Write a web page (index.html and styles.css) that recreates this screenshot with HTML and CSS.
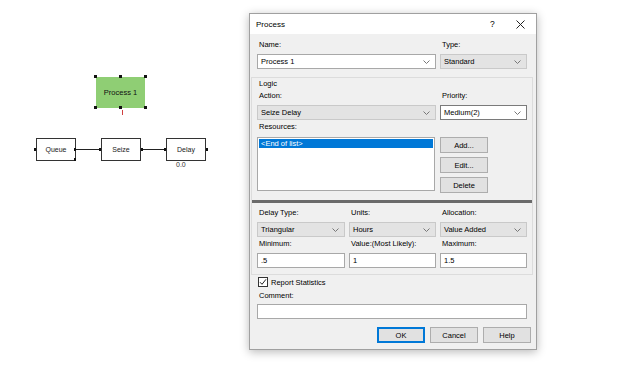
FILE: index.html
```html
<!doctype html>
<html lang="en">
    <head>
        <meta charset="UTF-8" />
        <title>Process</title>
        <link rel="stylesheet" href="styles.css">
    </head>
    <body>
        <div class="desk">
            <div class="canvas">
                <svg class="wires" width="249" height="365">
                    <line x1="74" y1="149.5" x2="101" y2="149.5" />
                    <line x1="141" y1="149.5" x2="166" y2="149.5" />
                </svg>

                <div class="node process" style="left:96px;top:77px">Process 1</div>
                <span class="handle" style="left:94px;top:75px"></span>
                <span class="handle" style="left:119px;top:75px"></span>
                <span class="handle" style="left:144px;top:75px"></span>
                <span class="handle" style="left:94px;top:106px"></span>
                <span class="handle" style="left:119px;top:106px"></span>
                <span class="handle" style="left:144px;top:106px"></span>
                <span class="tick red" style="left:122px;top:110px"></span>

                <div class="node box" style="left:36px;top:138px">Queue</div>
                <div class="node box" style="left:101px;top:138px">Seize</div>
                <div class="node box" style="left:166px;top:138px">Delay</div>
                <span class="dot" style="left:34px;top:148px"></span>
                <span class="dot" style="left:74px;top:148px"></span>
                <span class="dot" style="left:74px;top:158px"></span>
                <span class="dot" style="left:99px;top:148px"></span>
                <span class="dot" style="left:141px;top:148px"></span>
                <span class="dot" style="left:164px;top:148px"></span>
                <span class="dot" style="left:206px;top:148px"></span>
                <div class="note" style="left:176px;top:161px">0.0</div>
            </div>

            <div class="dialog">
                <div class="titlebar">
                    <span class="title">Process</span>
                    <span class="help">?</span>
                    <svg class="close" width="9" height="9" viewBox="0 0 9 9">
                        <path d="M0.5 0.5 L8.5 8.5 M8.5 0.5 L0.5 8.5" />
                    </svg>
                </div>

                <div class="dlg-body">
                    <div class="row3">
                        <div class="field span2">
                            <div class="lbl">Name:</div>
                            <div class="combo">Process 1<svg class="chev" width="7" height="4"><path d="M0.5 0.5 L3.5 3.5 L6.5 0.5" /></svg></div>
                        </div>
                        <div class="field">
                            <div class="lbl">Type:</div>
                            <div class="combo off">Standard<svg class="chev" width="7" height="4"><path d="M0.5 0.5 L3.5 3.5 L6.5 0.5" /></svg></div>
                        </div>
                    </div>

                    <div class="group">
                        <div class="group-title">Logic</div>
                        <div class="row3">
                            <div class="field span2">
                                <div class="lbl">Action:</div>
                                <div class="combo off">Seize Delay<svg class="chev" width="7" height="4"><path d="M0.5 0.5 L3.5 3.5 L6.5 0.5" /></svg></div>
                            </div>
                            <div class="field">
                                <div class="lbl">Priority:</div>
                                <div class="combo dark">Medium(2)<svg class="chev" width="7" height="4"><path d="M0.5 0.5 L3.5 3.5 L6.5 0.5" /></svg></div>
                            </div>
                        </div>

                        <div class="lbl res-lbl">Resources:</div>
                        <div class="res-row">
                            <div class="listbox">
                                <div class="item sel">&lt;End of list&gt;</div>
                            </div>
                            <div class="res-btns">
                                <button class="btn">Add...</button>
                                <button class="btn">Edit...</button>
                                <button class="btn">Delete</button>
                            </div>
                        </div>

                        <div class="separator"></div>

                        <div class="row3">
                            <div class="field">
                                <div class="lbl">Delay Type:</div>
                                <div class="combo off">Triangular<svg class="chev" width="7" height="4"><path d="M0.5 0.5 L3.5 3.5 L6.5 0.5" /></svg></div>
                            </div>
                            <div class="field">
                                <div class="lbl">Units:</div>
                                <div class="combo off">Hours<svg class="chev" width="7" height="4"><path d="M0.5 0.5 L3.5 3.5 L6.5 0.5" /></svg></div>
                            </div>
                            <div class="field">
                                <div class="lbl">Allocation:</div>
                                <div class="combo off">Value Added<svg class="chev" width="7" height="4"><path d="M0.5 0.5 L3.5 3.5 L6.5 0.5" /></svg></div>
                            </div>
                        </div>
                        <div class="row3 values">
                            <div class="field">
                                <div class="lbl">Minimum:</div>
                                <div class="input">.5</div>
                            </div>
                            <div class="field">
                                <div class="lbl">Value:(Most Likely):</div>
                                <div class="input">1</div>
                            </div>
                            <div class="field">
                                <div class="lbl">Maximum:</div>
                                <div class="input">1.5</div>
                            </div>
                        </div>
                    </div>

                    <div class="check">
                        <span class="box-check">
                            <svg width="8" height="8" viewBox="0 0 8 8"><path d="M1 4.2 L3 6.3 L7 1.3" /></svg>
                        </span>
                        Report Statistics
                    </div>

                    <div class="lbl comment-lbl">Comment:</div>
                    <div class="input wide"></div>

                    <div class="actions">
                        <button class="btn default">OK</button>
                        <button class="btn">Cancel</button>
                        <button class="btn">Help</button>
                    </div>
                </div>
            </div>
        </div>
    </body>
</html>
```

FILE: styles.css
```css
* {
    margin: 0;
    padding: 0;
    box-sizing: border-box;
}
body {
    width: 624px;
    height: 365px;
    background: #fff;
    font-family: "Liberation Sans", Arial, sans-serif;
    font-size: 7.5px;
    color: #000;
    overflow: hidden;
}
.desk {
    display: flex;
    align-items: flex-start;
}

/* diagram canvas */
.canvas {
    position: relative;
    width: 249px;
    height: 365px;
    flex: none;
}
.wires {
    position: absolute;
    left: 0;
    top: 0;
}
.wires line {
    stroke: #222;
    stroke-width: 1;
}
.node {
    position: absolute;
    display: grid;
    place-items: center;
    font-size: 7px;
}
.process {
    width: 49px;
    height: 31px;
    background: #8fce74;
    font-size: 7.5px;
    color: #111;
}
.box {
    width: 40px;
    height: 23px;
    background: #fff;
    border: 1px solid #333;
    color: #222;
}
.handle {
    position: absolute;
    width: 3px;
    height: 3px;
    background: #111;
}
.dot {
    position: absolute;
    width: 2px;
    height: 3px;
    background: #111;
}
.tick {
    position: absolute;
    width: 1px;
    height: 5px;
}
.red {
    background: #d04040;
}
.note {
    position: absolute;
    font-size: 7px;
    color: #333;
}

/* dialog window */
.dialog {
    width: 288px;
    height: 337px;
    margin-top: 13px;
    border: 1px solid #a0a0a0;
    background: #f0f0f0;
    box-shadow: 0 2px 9px rgba(0, 0, 0, 0.28);
    display: flex;
    flex-direction: column;
}
.titlebar {
    height: 20px;
    background: #fff;
    display: flex;
    align-items: center;
    padding-left: 6px;
    flex: none;
}
.title {
    flex: 1;
    font-size: 8px;
}
.help {
    font-size: 8.5px;
    width: 26px;
}
.close {
    margin-right: 11px;
}
.close path {
    stroke: #222;
    stroke-width: 1;
    fill: none;
}
.dlg-body {
    padding: 5px 8px 0 7px;
    display: flex;
    flex-direction: column;
}
.lbl {
    line-height: 12px;
    height: 12px;
    padding-left: 2px;
}

.row3 {
    display: grid;
    grid-template-columns: 88px 87px 87px;
    column-gap: 4px;
}
.span2 {
    grid-column: span 2;
}
.field .lbl {
    margin-bottom: 3px;
}

.combo,
.input {
    height: 15px;
    background: #fff;
    border: 1px solid #a8a8a8;
    display: flex;
    align-items: center;
    padding-left: 3px;
    white-space: nowrap;
}
.combo {
    justify-content: space-between;
    padding-right: 5px;
}
.combo.off {
    background: #e3e3e3;
    border-color: #c9c9c9;
}
.combo.dark {
    border-color: #7a7a7a;
}
.chev path {
    stroke: #777;
    stroke-width: 1;
    fill: none;
}

/* logic group */
.group {
    margin: 8px -5px 0 -6px;
    border: 1px solid #dcdcdc;
    padding: 0 5px 6px 5px;
}
.group-title {
    line-height: 11px;
    padding-left: 2px;
    margin-bottom: 1px;
}
.res-lbl {
    margin-top: 1px;
    margin-bottom: 4px;
}
.res-row {
    display: flex;
    gap: 5px;
}
.listbox {
    width: 178px;
    height: 54px;
    background: #fff;
    border: 1px solid #a8a8a8;
    padding: 1px;
}
.item {
    height: 9px;
    line-height: 9px;
    padding-left: 2px;
}
.item.sel {
    background: #0078d7;
    color: #fff;
}
.res-btns {
    display: flex;
    flex-direction: column;
    gap: 4px;
}
.btn {
    width: 48px;
    height: 16px;
    background: #e1e1e1;
    border: 1px solid #adadad;
    font-family: inherit;
    font-size: 7.5px;
    color: #000;
}
.btn.default {
    border-color: #0078d7;
    box-shadow: inset 0 0 0 1px #0078d7;
}
.separator {
    height: 3px;
    background: #6a6a6a;
    margin: 7px -5px 4px -5px;
}
.values {
    margin-top: 1px;
}

.check {
    display: flex;
    align-items: center;
    gap: 3px;
    margin-top: 1px;
    height: 12px;
    padding-left: 1px;
}
.box-check {
    width: 10px;
    height: 10px;
    border: 1px solid #333;
    background: #fff;
    display: grid;
    place-items: center;
}
.box-check path {
    stroke: #222;
    stroke-width: 1;
    fill: none;
}
.comment-lbl {
    margin-top: 2px;
    margin-bottom: 2px;
}
.input.wide {
    width: 270px;
}
.actions {
    display: flex;
    justify-content: flex-end;
    gap: 5px;
    margin-top: 8px;
    margin-right: -3px;
}
```
